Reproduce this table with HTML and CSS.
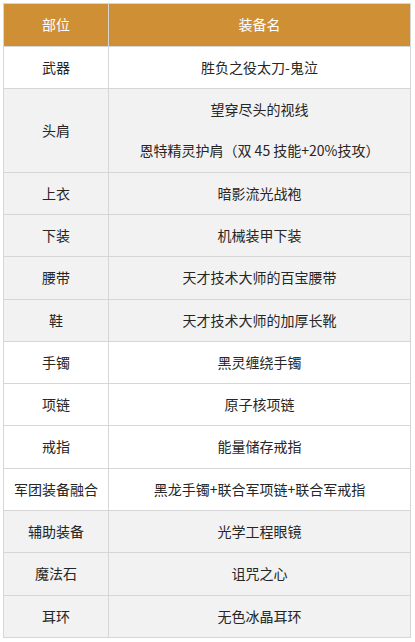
FILE: index.html
```html
<!DOCTYPE html>
<html lang="zh">
<head>
<meta charset="utf-8">
<link rel="stylesheet" href="styles.css">
</head>
<body>
<table class="gear">
  <colgroup><col class="c1"><col class="c2"></colgroup>
  <thead>
    <tr><th>部位</th><th>装备名</th></tr>
  </thead>
  <tbody>
    <tr class="w"><td>武器</td><td>胜负之役太刀-鬼泣</td></tr>
    <tr class="g"><td>头肩</td><td class="multi"><p>望穿尽头的视线</p><p>恩特精灵护肩（双 45 技能+20%技攻）</p></td></tr>
    <tr class="g"><td>上衣</td><td>暗影流光战袍</td></tr>
    <tr class="g"><td>下装</td><td>机械装甲下装</td></tr>
    <tr class="g"><td>腰带</td><td>天才技术大师的百宝腰带</td></tr>
    <tr class="g"><td>鞋</td><td>天才技术大师的加厚长靴</td></tr>
    <tr class="w"><td>手镯</td><td>黑灵缠绕手镯</td></tr>
    <tr class="w"><td>项链</td><td>原子核项链</td></tr>
    <tr class="w"><td>戒指</td><td>能量储存戒指</td></tr>
    <tr class="w"><td>军团装备融合</td><td>黑龙手镯+联合军项链+联合军戒指</td></tr>
    <tr class="g"><td>辅助装备</td><td>光学工程眼镜</td></tr>
    <tr class="g"><td>魔法石</td><td>诅咒之心</td></tr>
    <tr class="g"><td>耳环</td><td>无色冰晶耳环</td></tr>
  </tbody>
</table>
</body>
</html>
```
FILE: styles.css
```css
html, body {
  margin: 0;
  padding: 0;
  background: #ffffff;
}
body {
  padding: 3px;
  font-family: "Noto Sans CJK SC", "Noto Sans", sans-serif;
  font-size: 14px;
  color: #262626;
}
.gear {
  border-collapse: collapse;
  table-layout: fixed;
  width: 407px;
}
.gear .c1 { width: 105px; }
.gear .c2 { width: 302px; }
.gear th,
.gear td {
  border: 1px solid #d6d6d6;
  text-align: center;
  vertical-align: middle;
  padding: 10px 0;
  line-height: 21.3px;
  font-weight: normal;
}
.gear th {
  background: #cf9035;
  color: #ffffff;
  padding: 10px 0 10.5px;
}
.gear tr.w td { background: #ffffff; }
.gear tr.g td { background: #f2f2f2; }
.gear td.multi { padding: 0; }
.gear td.multi p {
  margin: 0;
  padding: 10px 0;
  line-height: 21.3px;
}
```
